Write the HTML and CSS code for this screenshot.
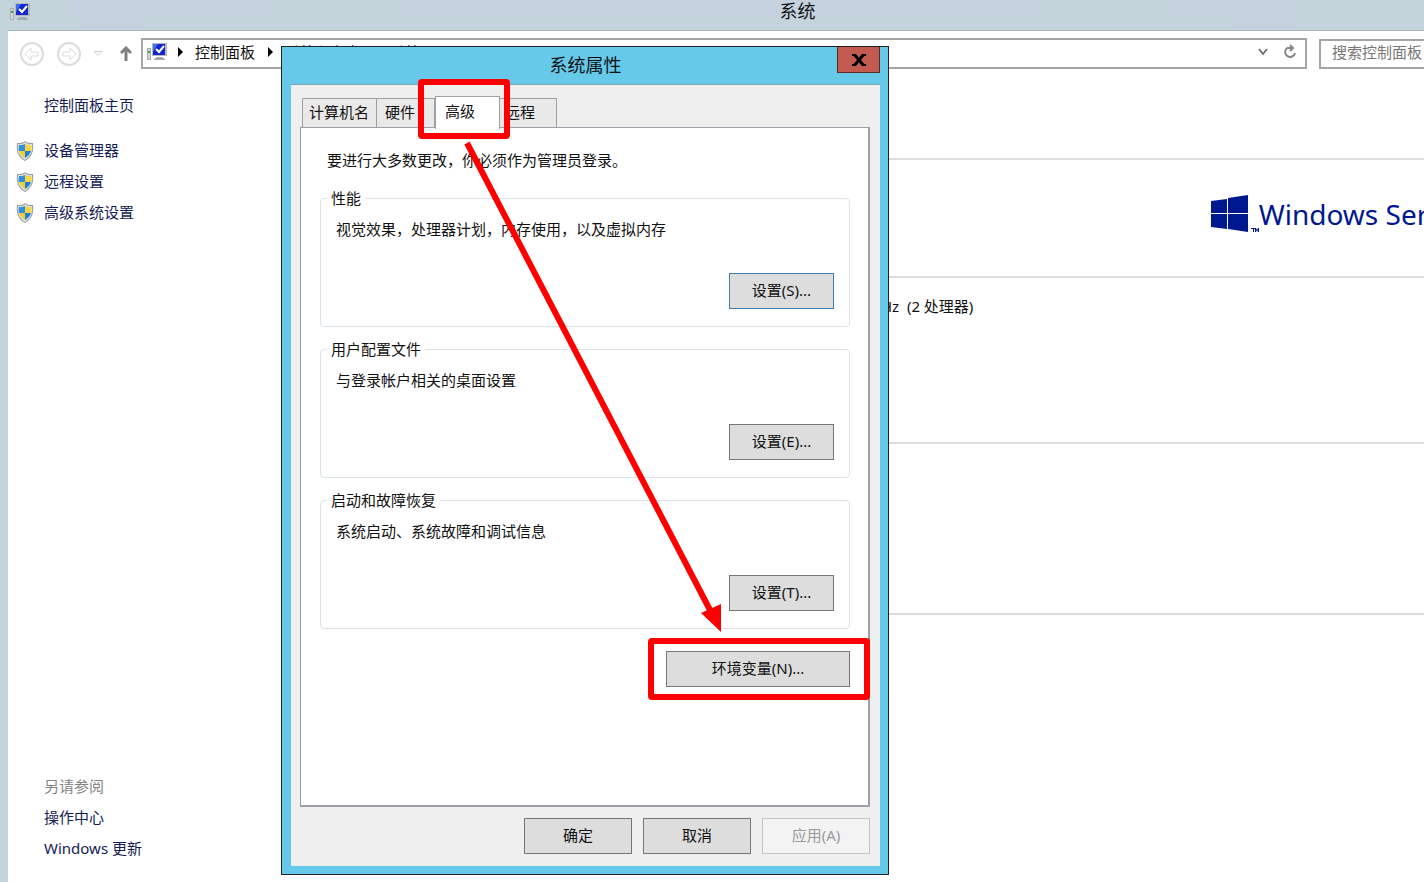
FILE: index.html
```html
<!DOCTYPE html>
<html lang="zh-CN">
<head>
  <meta charset="UTF-8">
  <meta name="viewport" content="width=device-width, initial-scale=1.0">
  <title>系统</title>
  <link rel="stylesheet" href="styles.css">
</head>

<body>
  <svg class="defs" width="0" height="0">
    <symbol id="computer" viewBox="0 0 20 18">
      <rect x="0" y="5" width="4" height="12" fill="#a9adad"/>
      <rect x="1" y="6" width="2" height="10" fill="#d5d8d8"/>
      <rect x="1" y="8" width="2" height="2" fill="#46a052"/>
      <path d="M7 16l3-2h5l3 2v1H7z" fill="#a5a8a8"/>
      <rect x="5" y="0" width="15" height="13" fill="#b9b9b3"/>
      <rect x="6" y="1" width="12" height="11" fill="#1426d3"/>
      <path d="M6 1h5L6 9z" fill="#3d6df0"/>
      <path d="M9 6l3 3 5-6" fill="none" stroke="#fff" stroke-width="2"/>
    </symbol>
    <symbol id="shield" viewBox="0 0 18 20">
      <path d="M9 0c2 2 5 2 8 2 1 8-1 14-8 18C2 16 0 10 1 2c3 0 6 0 8-2z" fill="#979c9c"/>
      <path d="M9 1c2 2 4 2 7 2 1 7-1 12-7 16C3 15 1 10 2 3c3 0 5 0 7-2z" fill="#dde0dd"/>
      <path d="M9 3v7H3c-1-2 0-4 0-6 2 0 4 0 6-1z" fill="#2f8fe0"/>
      <path d="M9 3c2 1 4 1 6 1 0 2 1 4 0 6H9z" fill="#f6d63b"/>
      <path d="M3 10h6v7c-3-2-5-4-6-7z" fill="#f3cf2e"/>
      <path d="M9 10h6c-1 3-3 5-6 7z" fill="#1f7fd8"/>
    </symbol>
  </svg>

  <div class="window">
    <header class="titlebar">
      <svg class="title-icon" width="20" height="18"><use href="#computer"/></svg>
      <h1>系统</h1>
    </header>

    <div class="client">
      <nav class="navbar">
        <button class="nav-btn" aria-label="后退" disabled>
          <svg width="24" height="24" viewBox="0 0 24 24" fill="none" stroke="#dcdcdc">
            <circle cx="12" cy="12" r="11" stroke-width="2"/>
            <path d="M5 12l6-6v4h7v4h-7v4z" stroke-width="1"/>
          </svg>
        </button>
        <button class="nav-btn" aria-label="前进" disabled>
          <svg width="24" height="24" viewBox="0 0 24 24" fill="none" stroke="#dcdcdc">
            <circle cx="12" cy="12" r="11" stroke-width="2"/>
            <path d="M19 12l-6-6v4H6v4h7v4z" stroke-width="1"/>
          </svg>
        </button>
        <button class="recent-btn" aria-label="最近" disabled>
          <svg width="8" height="5" viewBox="0 0 8 5" fill="none" stroke="#d0d0d0"><path d="M0 0.5h8L4 4.500z"/></svg>
        </button>
        <button class="up-btn" aria-label="向上">
          <svg width="12" height="16" viewBox="0 0 12 16" fill="none" stroke="#808080" stroke-width="3"><path d="M6 15V2M1 7l5-5 5 5"/></svg>
        </button>
        <div class="address">
          <svg width="20" height="18"><use href="#computer"/></svg>
          <svg class="crumb-arrow" width="5" height="10"><path d="M0 0l5 5-5 5z"/></svg>
          <a href="#">控制面板</a>
          <svg class="crumb-arrow" width="5" height="10"><path d="M0 0l5 5-5 5z"/></svg>
          <a href="#">系统和安全</a>
          <svg class="crumb-arrow" width="5" height="10"><path d="M0 0l5 5-5 5z"/></svg>
          <a href="#">系统</a>
          <div class="address-tools">
            <button aria-label="展开">
              <svg width="10" height="8" viewBox="0 0 10 8" fill="none" stroke="#747474" stroke-width="2"><path d="M1 1l4 5 4-5"/></svg>
            </button>
            <button aria-label="刷新">
              <svg width="14" height="16" viewBox="0 0 14 16" fill="none" stroke="#858585" stroke-width="2"><path d="M4 4a5 5 0 1 0 8 5M4 4h6M7 1l3 3-3 3"/></svg>
            </button>
          </div>
        </div>
        <input class="search" type="text" placeholder="搜索控制面板" aria-label="搜索控制面板">
      </nav>

      <div class="columns">
        <aside class="sidebar">
          <a class="home" href="#">控制面板主页</a>
          <a class="task" href="#"><svg width="18" height="20"><use href="#shield"/></svg>设备管理器</a>
          <a class="task" href="#"><svg width="18" height="20"><use href="#shield"/></svg>远程设置</a>
          <a class="task" href="#"><svg width="18" height="20"><use href="#shield"/></svg>高级系统设置</a>
          <div class="see-also">
            <span>另请参阅</span>
            <a href="#">操作中心</a>
            <a href="#">Windows 更新</a>
          </div>
        </aside>

        <main class="details">
          <section class="edition">
            <svg width="48" height="38" viewBox="0 0 48 38" fill="#00188f">
              <path d="M0 6l16-2v14H0zM17 3l20-3v18H17zM0 19h16v15L0 32zM17 19h20v18l-20-3z"/>
              <path d="M40 33h4v1h-1v3h-1v-3h-2zM44 37v-4h1l1 2 1-2h1v4h-1v-2l-1 2-1-2v2z"/>
            </svg>
            <span>Windows Server 2012 R2</span>
          </section>
          <section class="processor">GHz &nbsp;(2 处理器)</section>
          <section class="computer-name"></section>
        </main>
      </div>
    </div>
  </div>

  <div class="dialog" role="dialog" aria-labelledby="dialog-title">
    <div class="dialog-title">
      <h2 id="dialog-title">系统属性</h2>
      <button class="close" aria-label="关闭">
        <svg width="14" height="12" viewBox="0 0 14 12" stroke="#000" stroke-width="3"><path d="M2 0l10 12M12 0L2 12"/><path d="M0 1h4M10 1h4M0 11h4M10 11h4" stroke-width="2"/></svg>
      </button>
    </div>

    <div class="dialog-body">
      <div class="tabs" role="tablist">
        <button role="tab">计算机名</button>
        <button role="tab">硬件</button>
        <button role="tab" class="active" aria-selected="true">高级</button>
        <button role="tab">远程</button>
      </div>

      <div class="panel" role="tabpanel">
        <p class="notice">要进行大多数更改，你必须作为管理员登录。</p>
        <fieldset>
          <legend>性能</legend>
          <p>视觉效果，处理器计划，内存使用，以及虚拟内存</p>
          <button class="btn focused">设置(S)...</button>
        </fieldset>
        <fieldset>
          <legend>用户配置文件</legend>
          <p>与登录帐户相关的桌面设置</p>
          <button class="btn">设置(E)...</button>
        </fieldset>
        <fieldset>
          <legend>启动和故障恢复</legend>
          <p>系统启动、系统故障和调试信息</p>
          <button class="btn">设置(T)...</button>
        </fieldset>
        <button class="btn env">环境变量(N)...</button>
      </div>

      <div class="actions">
        <button class="btn">确定</button>
        <button class="btn">取消</button>
        <button class="btn" disabled>应用(A)</button>
      </div>
    </div>

    <!-- highlight boxes and arrow -->
    <svg class="marks" width="608" height="829" viewBox="0 0 608 829" fill="none" stroke="#f00" stroke-width="6">
      <rect x="140" y="36" width="86" height="54" rx="1"/>
      <rect x="370" y="595" width="216" height="56" rx="1"/>
      <path d="M186 97L429 564"/>
      <path d="M440 586L420 567L440 558z" fill="#f00" stroke="none"/>
    </svg>
  </div>
</body>
</html>
```

FILE: styles.css
```css
* {
  box-sizing: border-box;
}
body {
  margin: 0;
  height: 100vh;
  overflow: hidden;
  position: relative;
  font-family: "Noto Sans", "Noto Sans CJK SC", sans-serif;
  font-size: 15px;
  line-height: 20px;
  color: #111;
}
h1, h2, p {
  margin: 0;
  font-weight: normal;
}
a {
  color: inherit;
  text-decoration: none;
}
button {
  font: inherit;
  color: inherit;
  padding: 0;
  border: 0;
  background: none;
}
svg {
  display: block;
  flex: none;
}
.defs {
  position: absolute;
}

/* the control panel window runs past the right edge of the screen */
.window {
  width: 112vw;
  height: 100vh;
  display: flex;
  flex-direction: column;
  background: #c3d5da;
  padding: 0 8px;
}
.titlebar {
  height: 30px;
  display: grid;
  grid-template-columns: 20px 1fr 20px;
  align-items: center;
  background-image:
    linear-gradient(90deg, transparent 60px, #c6d1e0 60px, #c6d1e0 264px, transparent 264px, transparent 392px, #c6d1e0 392px, #c6d1e0 1032px, transparent 1032px, transparent 1159px, #c6d1e0 1159px, #c6d1e0 1288px, transparent 1288px),
    linear-gradient(90deg, transparent 70px, #c6d1e0 70px, #c6d1e0 136px, transparent 136px, transparent 1224px, #c6d1e0 1224px, #c6d1e0 1288px, transparent 1288px);
  background-size: 100% 17px, 100% 100%;
  background-repeat: no-repeat;
}
.title-icon {
  margin: 0 0 7px 2px;
}
.titlebar h1 {
  font-size: 18px;
  line-height: 22px;
  padding-bottom: 8px;
  text-align: center;
}
.client {
  flex: 1;
  display: flex;
  flex-direction: column;
  background: #fff;
  border-top: 1px solid #aab4bd;
}
.navbar {
  display: flex;
  align-items: center;
  padding: 7px 8px 7px 12px;
}
.nav-btn {
  margin-right: 13px;
}
.recent-btn {
  margin-right: 18px;
}
.up-btn {
  margin-right: 9px;
}
.address {
  flex: 1;
  height: 31px;
  display: flex;
  align-items: center;
  padding: 0 8px 3px 4px;
  border: 2px solid #a5a5a5;
}
.address > a {
  margin-right: 13px;
}
.crumb-arrow {
  margin: 0 12px 0 0;
}
.address > svg:first-child {
  margin-right: 11px;
}
.address-tools {
  display: flex;
  align-items: center;
  gap: 15px;
  margin-left: auto;
}
.search {
  width: 260px;
  height: 30px;
  margin-left: 12px;
  padding: 0 11px 3px;
  border: 2px solid #a5a5a5;
  border-radius: 0;
  font: inherit;
}
.search::placeholder {
  color: #777;
}
.columns {
  flex: 1;
  display: flex;
}
.sidebar {
  width: 280px;
  display: flex;
  flex-direction: column;
  padding: 14px 0 18px 8px;
  color: #151c55;
  line-height: 31px;
}
.home {
  margin: 0 0 14px 28px;
}
.task {
  display: flex;
  align-items: center;
  gap: 10px;
}
.see-also {
  display: flex;
  flex-direction: column;
  margin: auto 0 0 28px;
}
.see-also span {
  color: #858585;
}
.details {
  flex: 1;
  padding-top: 82px;
}
.details section {
  border-top: 2px solid #dcdcdc;
}
.edition {
  height: 118px;
  display: flex;
  align-items: center;
  justify-content: flex-end;
  padding: 0 5px 8px 0;
  font-size: 28px;
  line-height: 36px;
  color: #00188f;
}
.processor {
  height: 166px;
  padding: 18px 0 0 582px;
}
.details .computer-name {
  height: 173px;
  border-bottom: 2px solid #dcdcdc;
}

.dialog {
  position: absolute;
  left: 281px;
  top: 46px;
  width: 608px;
  padding: 0 8px 8px 9px;
  border: 1px solid #222;
  background: #66c9ea;
}
.dialog-title {
  display: grid;
  grid-template-columns: 43px 1fr 43px;
  align-items: start;
}
.dialog-title h2 {
  grid-column: 2;
  font-size: 18px;
  line-height: 37px;
  text-align: center;
}
.close {
  display: flex;
  align-items: center;
  justify-content: center;
  height: 26px;
  background: #c25a4f;
  border: 1px solid #5c2b26;
  border-top: 0;
}
.dialog-body {
  padding: 11px 10px 12px 9px;
  background: #efefef;
  border-top: 1px solid #7da5ba;
}
.tabs {
  display: flex;
  align-items: flex-end;
  padding-left: 2px;
}
.tabs button {
  height: 29px;
  padding: 0 7px 2px 6px;
  background: #e9e9e9;
  border: 1px solid #a0a0a4;
  border-bottom: 0;
}
.tabs button + button {
  width: 58px;
  padding-left: 8px;
  border-left: 0;
  text-align: left;
}
.tabs .active + button {
  width: 57px;
  padding-left: 5px;
}
.tabs button.active {
  width: 65px;
  height: 33px;
  margin-bottom: -2px;
  padding: 0 9px 5px;
  background: #fff;
  border-left: 1px solid #a0a0a4;
  z-index: 1;
}
.panel {
  height: 680px;
  display: flex;
  flex-direction: column;
  gap: 12px;
  padding: 22px 18px 22px 19px;
  background: #fff;
  border: 2px solid #9c9fa8;
  border-width: 1px 2px 2px 1px;
}
.notice {
  padding-left: 7px;
  margin-bottom: 6px;
}
fieldset {
  height: 139px;
  margin: 0;
  padding: 0 15px 0 6px;
  border: 1px solid #dbe3ea;
  border-radius: 4px;
}
legend {
  padding: 0 4px;
}
fieldset p {
  padding: 11px 0 34px 9px;
}
.btn {
  display: block;
  width: 108px;
  height: 36px;
  padding-bottom: 3px;
  background: #dddddd;
  border: 1px solid #777;
}
fieldset .btn {
  width: 105px;
  margin-left: auto;
}
.btn.focused {
  border-color: #3c7fb1;
}
.btn.env {
  width: 184px;
  margin: 10px 0 0;
  align-self: flex-end;
}
.btn:disabled {
  color: #999;
  background: #f3f3f3;
  border-color: #c4c4c4;
}
.actions {
  display: flex;
  justify-content: flex-end;
  gap: 11px;
  padding-top: 11px;
}
.marks {
  position: absolute;
  left: -1px;
  top: -1px;
}
```
